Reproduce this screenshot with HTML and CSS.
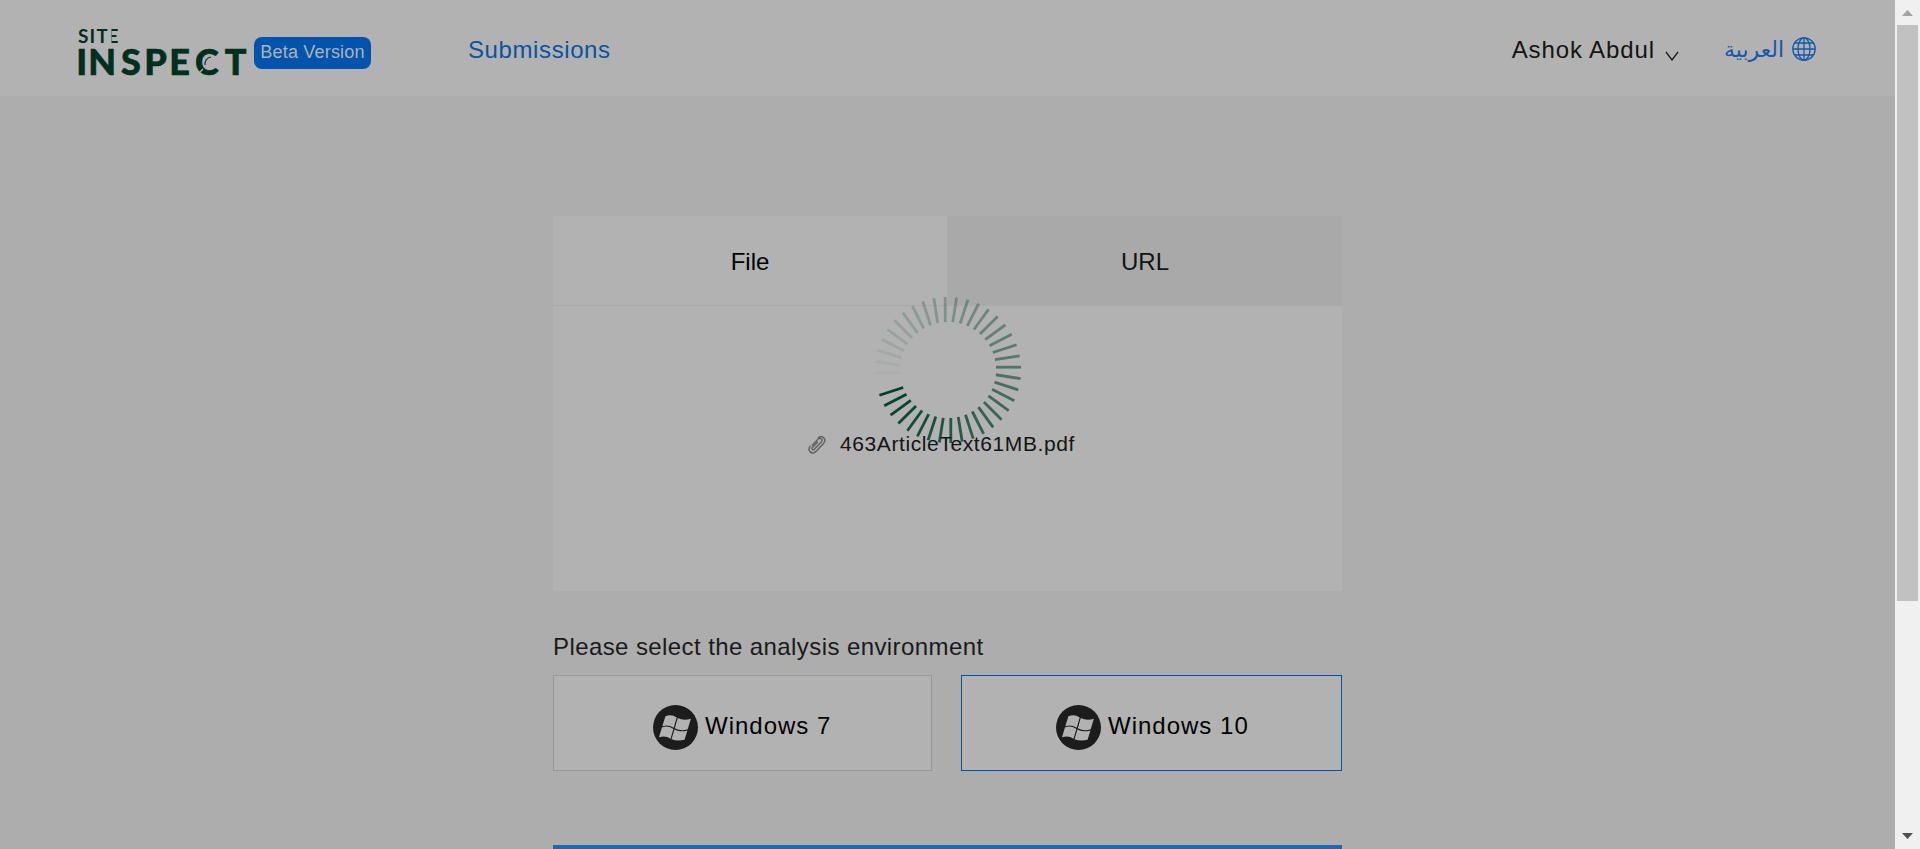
FILE: index.html
```html
<!DOCTYPE html>
<html lang="en">
<head>
<meta charset="utf-8">
<title>Site Inspect</title>
<link rel="stylesheet" href="styles.css">
</head>
<body>
<div class="page">
  <header class="header">
    <svg class="logo" width="170" height="52" viewBox="0 0 170 52">
      <g class="logo-ink">
        <text class="logo-small" y="15.500" x="0 11.500 18.500 29.500">SITE</text>
        <rect class="logo-cut" x="29.500" y="1" width="4" height="16"/>
        <text class="logo-big" y="47.500" x="-1.700 10.300 43 66.300 91.300 117 146.700">INSPECT</text>
        <path class="logo-glass" d="M127 38a7 7 0 0 1 6-8"/>
        <path class="logo-slit" d="M119 48l6-6"/>
      </g>
    </svg>
    <span class="badge">Beta Version</span>
    <a class="nav-link">Submissions</a>
    <div class="user"><span class="user-name">Ashok Abdul</span>
      <svg class="chevron" width="14" height="10" viewBox="0 0 14 10"><path d="M1 1l6 8 6-8"/></svg>
    </div>
    <a class="lang"><span class="lang-name" lang="ar">العربية</span>
      <svg class="globe" width="24" height="24" viewBox="0 0 24 24"><circle cx="12" cy="12" r="11.2"/><ellipse cx="12" cy="12" rx="6" ry="11.2"/><path d="M12 1v22M1 12h22M3 6h18M3 18h18"/></svg>
    </a>
  </header>
  <main class="main">
    <section class="card">
      <div class="tabs"><div class="tab tab-active">File</div><div class="tab tab-url">URL</div></div>
      <div class="drop">
        <svg class="clip" width="18" height="20" viewBox="0 0 18 20"><path d="M4 10.5l6-6.3c2.4-2.4 5.4.2 3.3 2.700l-7 7.300c-1.500 1.300-3-.3-1.900-1.700l5.600-5.800M2.600 10.800c-4 4.600 1.200 9.800 5.400 5.600l7.300-7.700c4-4.500-1.300-9.500-5.500-5.500"/></svg>
        <span class="file-name">463ArticleText61MB.pdf</span>
      </div>
    </section>
    <h2 class="label">Please select the analysis environment</h2>
    <div class="envs">
      <div class="env">
        <svg class="win" width="45" height="45" viewBox="0 0 45 45"><use href="#win"/></svg><span>Windows 7</span>
      </div>
      <div class="env env-on">
        <svg class="win" width="45" height="45" viewBox="0 0 45 45"><g id="win"><circle class="win-disc" cx="22.500" cy="22.500" r="22.500"/><path class="win-flag" d="M12.400 11.200q6-2.600 11.300 1.200L20.700 22.700Q15 19 9.300 21.200zM24.800 13q5.500 3.200 13.100.8L34.700 24.300Q28 26.500 21.800 23.300zM8.900 22.400Q14.700 20.200 20.400 23.900L17.500 33.800Q12.500 30 6 32.300zM21.500 24.500Q27.500 27.600 34.400 25.500L31.600 34.800Q24.500 36.600 18.500 34.300z"/></g></svg><span>Windows 10</span>
      </div>
    </div>
    <div class="submit"></div>
  </main>
</div>
<aside class="scrollbar">
  <svg class="arrow arrow-up" width="11" height="6" viewBox="0 0 11 6"><path d="M0 6L5.500 0 11 6z"/></svg>
  <div class="thumb"></div>
  <svg class="arrow arrow-down" width="11" height="6" viewBox="0 0 11 6"><path d="M0 0h11L5.500 6z"/></svg>
</aside>
<svg class="spinner" id="spinner" width="150" height="150" viewBox="-75 -75 150 150"></svg>
<script src="spinner.js"></script>
</body>
</html>
```
FILE: styles.css
```css
* { box-sizing: border-box; }
body {
  margin: 0; height: 849px; overflow: hidden; display: flex; position: relative;
  background: #adadad; color: #000;
  font: 24px/30px "Liberation Sans", Arial, sans-serif;
  white-space: nowrap;
}
.page { width: 1895px; }
.header { height: 96px; background: #b2b2b2; display: flex; align-items: flex-start; padding: 27px 79px 0 78px; }
.logo { overflow: visible; flex: none; }
.logo-ink { fill: #002f1e; }
.logo-small { font: 700 19px Lato, sans-serif; }
.logo-big { font: 900 36px Lato, sans-serif; stroke: #002f1e; stroke-width: 0.6; }
.logo-cut { fill: #b2b2b2; }
.logo-glass { fill: none; stroke: #002f1e; stroke-width: 1.2; }
.logo-slit { stroke: #b2b2b2; stroke-width: 1.3; }
.badge { width: 117px; height: 32px; margin: 10px 0 0 6px; border-radius: 8px; background: #0054ae; color: #b2b2b2; font-size: 18px; line-height: 30px; text-align: center; letter-spacing: 0.2px; flex: none; }
.nav-link { margin: 8px 0 0 97px; color: #0b52a0; letter-spacing: 0.6px; }
.user { margin: 8px 0 0 auto; display: flex; color: #141414; }
.user-name { letter-spacing: 0.9px; margin-right: -1px; }
.chevron { margin: 16px 0 0 11px; fill: none; stroke: #1c1c1c; stroke-width: 1.3; }
.lang { display: flex; margin-left: 45px; color: #1459ab; }
.lang-name { font: 22px/30px "DejaVu Sans", sans-serif; margin-top: 8px; width: 59px; }
.globe { margin: 10px 0 0 9px; fill: none; stroke: #1459ab; stroke-width: 1.3; }
.main { width: 789px; margin: 120px 0 0 553px; }
.card { height: 375px; background: #b2b2b2; }
.tabs { display: flex; height: 90px; border-bottom: 1px solid #a9a9a9; }
.tab { flex: 1; text-align: center; padding-top: 31px; }
.tab-url { background: #a9a9a9; color: #141414; padding-left: 1px; }
.drop { display: flex; padding: 129px 0 0 255px; }
.clip { fill: none; stroke: #626262; stroke-width: 1.5; margin-right: 14px; }
.file-name { font-size: 21px; line-height: 24px; margin-top: -3px; letter-spacing: 0.6px; color: #141414; }
.label { margin: 41px 0 0; font-size: 24px; font-weight: 400; color: #1a1a1a; letter-spacing: 0.41px; }
.envs { display: flex; gap: 29px; margin-top: 13px; }
.env { width: 379px; height: 96px; background: #b2b2b2; border: 1px solid #989898; display: flex; padding: 29px 0 0 99px; }
.env-on { width: 381px; border-color: #0054ae; padding-left: 94px; }
.win { margin-right: 7px; flex: none; }
.win-disc { fill: #1c1c1c; }
.win-flag { fill: #b2b2b2; }
.env span { margin-top: 6px; letter-spacing: 1px; }
.submit { height: 40px; margin-top: 74px; background: #1c68b3; }
.scrollbar { width: 25px; height: 849px; background: #f0f0f0; display: flex; flex-direction: column; align-items: center; padding: 10px 0; }
.arrow { flex: none; }
.arrow-up { fill: #a3a3a3; }
.arrow-down { fill: #505050; margin-top: auto; }
.thumb { width: 21px; height: 576px; margin-top: 9px; background: #c1c1c1; }
.spinner { position: absolute; left: 873px; top: 294.500px; }
.spoke { stroke: #00402a; stroke-width: 2.800; }
```
FILE: spinner.js
```js
// Forty spokes, fading step by step from the leading one.
const spinner = document.getElementById("spinner");
for (let k = 0; k < 40; k++) {
  const line = document.createElementNS("http://www.w3.org/2000/svg", "line");
  line.setAttribute("x1", 48);
  line.setAttribute("x2", 73);
  line.setAttribute("y1", -2.8);
  line.setAttribute("y2", -2.8);
  line.setAttribute("class", "spoke");
  line.setAttribute("transform", `rotate(${162 - 9 * k})`);
  line.setAttribute("opacity", 1 - k / 39);
  spinner.appendChild(line);
}
```
